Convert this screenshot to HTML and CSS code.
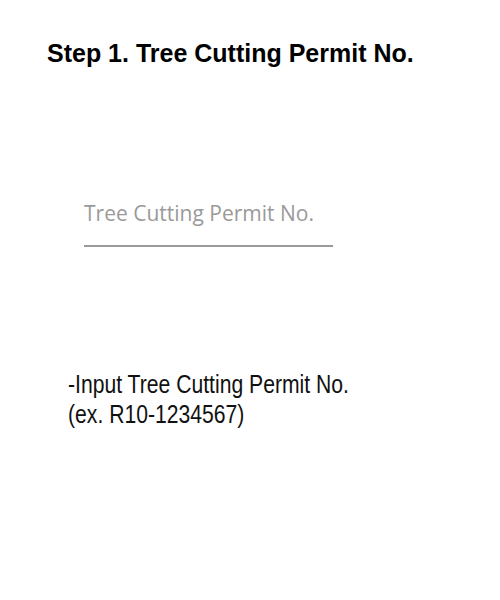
FILE: index.html
```html
<!DOCTYPE html>
<html>
<head>
<meta charset="utf-8">
<link rel="stylesheet" href="styles.css">
</head>
<body>
<div class="page">
  <h1 class="title">Step 1. Tree Cutting Permit No.</h1>
  <div class="field">
    <input class="permit-input" type="text" placeholder="Tree Cutting Permit No.">
  </div>
  <p class="hint">-Input Tree Cutting Permit No.<br>(ex. R10-1234567)</p>
</div>
</body>
</html>
```
FILE: styles.css
```css
html, body {
  margin: 0;
  padding: 0;
  background: #ffffff;
}
.page {
  width: 500px;
  height: 600px;
  display: flex;
  flex-direction: column;
  align-items: flex-start;
}
.title {
  margin: 36px 0 0 47px;
  font-family: "Liberation Sans", Arial, sans-serif;
  font-weight: bold;
  font-size: 25px;
  line-height: 34px;
  color: #000;
  white-space: nowrap;
}
.field {
  margin: 129px 0 0 84px;
  width: 249px;
}
.permit-input {
  display: block;
  width: 100%;
  height: 48px;
  box-sizing: border-box;
  border: none;
  border-bottom: 2px solid #9a9a9a;
  outline: none;
  margin: 0;
  padding: 0 0 18px 0;
  font-family: "Open Sans", sans-serif;
  font-size: 21px;
  line-height: 28px;
  color: #333;
  background: transparent;
}
.permit-input::placeholder {
  color: #9a9a9a;
}
.hint {
  margin: 122px 0 0 68px;
  font-family: "Liberation Sans", Arial, sans-serif;
  font-size: 25px;
  line-height: 30px;
  color: #111;
  white-space: nowrap;
  transform: scaleX(0.846);
  transform-origin: left top;
}
```
